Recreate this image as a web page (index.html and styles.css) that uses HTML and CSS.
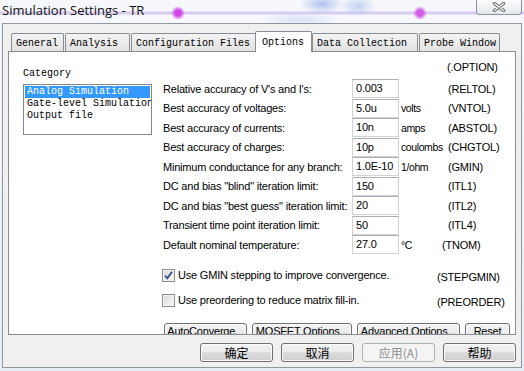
FILE: index.html
```html
<!DOCTYPE html>
<html>
<head>
<meta charset="utf-8">
<title>Simulation Settings - TR</title>
<link rel="stylesheet" href="styles.css">
</head>
<body>
<div class="win">
  <div class="titlebar">
    <span class="title">Simulation Settings - TR</span>
    <div class="close">
      <svg width="14" height="10" viewBox="0 0 14 10"><path d="M2.5 1.5 L11.5 8.5 M11.5 1.5 L2.5 8.5" stroke="#6b6b6b" stroke-width="3.4" stroke-linecap="round"/><path d="M2.5 1.5 L11.5 8.5 M11.5 1.5 L2.5 8.5" stroke="#fafafa" stroke-width="1.3" stroke-linecap="round"/></svg>
    </div>
  </div>
  <div class="frame">
    <div class="tabs">
      <div class="tab t-gen">General</div>
      <div class="tab t-ana">Analysis</div>
      <div class="tab t-cfg">Configuration Files</div>
      <div class="tab sel t-opt">Options</div>
      <div class="tab t-dc">Data Collection</div>
      <div class="tab t-pw">Probe Window</div>
    </div>
    <div class="panel">
      <div class="cat">
        <div class="cat-label">Category</div>
        <div class="listbox">
          <div class="li sel">Analog Simulation</div>
          <div class="li">Gate-level Simulation</div>
          <div class="li">Output file</div>
        </div>
      </div>
      <div class="opts">
        <div class="optline">(.OPTION)</div>
        <div class="form">
          <span class="lbl">Relative accuracy of V's and I's:</span><span class="inp">0.003</span><span class="unit"></span><span class="code">(RELTOL)</span>
          <span class="lbl">Best accuracy of voltages:</span><span class="inp">5.0u</span><span class="unit">volts</span><span class="code">(VNTOL)</span>
          <span class="lbl">Best accuracy of currents:</span><span class="inp">10n</span><span class="unit">amps</span><span class="code">(ABSTOL)</span>
          <span class="lbl">Best accuracy of charges:</span><span class="inp">10p</span><span class="unit">coulombs</span><span class="code">(CHGTOL)</span>
          <span class="lbl">Minimum conductance for any branch:</span><span class="inp">1.0E-10</span><span class="unit">1/ohm</span><span class="code">(GMIN)</span>
          <span class="lbl">DC and bias "blind" iteration limit:</span><span class="inp">150</span><span class="unit"></span><span class="code">(ITL1)</span>
          <span class="lbl">DC and bias "best guess" iteration limit:</span><span class="inp">20</span><span class="unit"></span><span class="code">(ITL2)</span>
          <span class="lbl">Transient time point iteration limit:</span><span class="inp">50</span><span class="unit"></span><span class="code">(ITL4)</span>
          <span class="lbl">Default nominal temperature:</span><span class="inp">27.0</span><span class="unit">°C</span><span class="code l6">(TNOM)</span>
        </div>
        <div class="checks">
          <div class="chk">
            <span class="chk-l"><span class="cbox on"><svg width="11" height="11" viewBox="0 0 11 11"><path d="M2 5.5 L4.3 8.3 L9 1.8" fill="none" stroke="#3d4f8f" stroke-width="1.9"/></svg></span>Use GMIN stepping to improve convergence.</span>
            <span class="ccode">(STEPGMIN)</span>
          </div>
          <div class="chk">
            <span class="chk-l"><span class="cbox"></span>Use preordering to reduce matrix fill-in.</span>
            <span class="ccode">(PREORDER)</span>
          </div>
        </div>
        <div class="pbtns">
          <span class="pbtn w1">AutoConverge...</span>
          <span class="pbtn w2">MOSFET Options...</span>
          <span class="pbtn w3">Advanced Options...</span>
          <span class="pbtn w4">Reset</span>
        </div>
      </div>
    </div>
    <div class="dlg">
      <span class="btn">确定</span>
      <span class="btn">取消</span>
      <span class="btn dis">应用(A)</span>
      <span class="btn">帮助</span>
    </div>
  </div>
</div>
</body>
</html>
```
FILE: styles.css
```css
* { box-sizing: border-box; margin: 0; padding: 0; }
html, body { width: 524px; height: 371px; overflow: hidden; }
body {
  font-family: "Liberation Sans", Arial, sans-serif;
  font-size: 11px;
  color: #000;
  background: #eaf0f6;
}
.win {
  width: 524px;
  height: 371px;
  display: flex;
  flex-direction: column;
  background: linear-gradient(#f4f7fb, #e8eef5);
}
.titlebar {
  height: 23px;
  flex: none;
  display: flex;
  align-items: flex-start;
  background:
    radial-gradient(circle at 178px 13px, #cf47e6 0, #cf47e6 3px, rgba(207,71,230,0) 7px),
    radial-gradient(circle at 420px 13px, #d45be8 0, #d45be8 3px, rgba(212,91,232,0) 7px),
    radial-gradient(ellipse 22px 10px at 322px 4px, rgba(120,150,225,.55), rgba(120,150,225,0)),
    radial-gradient(ellipse 18px 10px at 358px 6px, rgba(130,160,230,.45), rgba(130,160,230,0)),
    radial-gradient(ellipse 40px 8px at 300px 20px, rgba(170,185,240,.35), rgba(170,185,240,0)),
    linear-gradient(rgba(0,0,0,0) 11px, rgba(205,185,235,.7) 12px, rgba(205,185,235,.7) 14px, rgba(0,0,0,0) 15px),
    #f6f8fc;
}
.title {
  font-family: "Open Sans", "Noto Sans", sans-serif;
  font-size: 13px;
  line-height: 18px;
  padding: 1px 0 0 2px;
  color: #111;
}
.close {
  margin-left: auto;
  margin-right: 2px;
  margin-top: -1px;
  width: 46px;
  height: 16px;
  border: 1px solid #8c939c;
  border-top: none;
  border-radius: 0 0 4px 4px;
  background: linear-gradient(#fdfdfe, #e4e8ee);
  display: flex;
  align-items: center;
  justify-content: center;
}
.frame {
  flex: none;
  height: 345px;
  margin: 0 2px;
  border: 1px solid #8e96a0;
  background: #f0f0f0;
  padding-top: 7px;
}
.tabs {
  display: flex;
  align-items: flex-end;
  height: 20px;
  margin-left: 8px;
  font-family: "Liberation Mono", "DejaVu Sans Mono", monospace;
  font-size: 10px;
}
.tab {
  height: 18px;
  border: 1px solid #898c95;
  border-bottom: none;
  border-radius: 2px 2px 0 0;
  margin-right: 1px;
  padding: 3px 0 0 4px;
  line-height: 13px;
  background: linear-gradient(#f4f4f4, #e2e2e2);
  white-space: nowrap;
}
.tab.sel {
  height: 21px;
  margin: 0 0 -1px -2px;
  padding: 4px 0 0 6px;
  background: #fff;
  position: relative;
  z-index: 1;
}
.t-gen { width: 53px; }
.t-ana { width: 65px; }
.t-cfg { width: 125px; }
.t-opt { width: 57px; }
.t-dc { width: 106px; }
.t-pw { width: 81px; }

.panel {
  margin-left: 5px;
  width: 508px;
  height: 284px;
  border: 1px solid #898c95;
  background: #fff;
  display: flex;
  overflow: hidden;
}
.cat {
  flex: none;
  width: 129px;
  margin-left: 14px;
  padding-top: 15px;
  font-family: "Liberation Mono", "DejaVu Sans Mono", monospace;
  font-size: 10px;
}
.cat-label { height: 14px; line-height: 14px; }
.listbox {
  margin-top: 3px;
  height: 51px;
  border: 1px solid #828790;
  padding: 1px;
  overflow: hidden;
}
.li { height: 12px; line-height: 12px; padding-left: 2px; white-space: nowrap; }
.li.sel { background: #3399ff; color: #fff; }

.opts { flex: 1; margin-left: 11px; padding-top: 8px; letter-spacing: -0.2px; }
.optline { height: 14px; line-height: 14px; padding-left: 284px; margin-bottom: 5px; }
.form {
  display: grid;
  grid-template-columns: 189px 47px 49px auto;
  grid-auto-rows: 19px;
  row-gap: 0.5px;
  align-items: center;
}
.lbl { white-space: nowrap; }
.inp {
  height: 19px;
  border: 1px solid #cfd3d8;
  border-top-color: #abadb3;
  padding-left: 3px;
  line-height: 17px;
}
.unit { padding-left: 2px; white-space: nowrap; letter-spacing: -0.4px; font-size: 10.5px; }
.code { white-space: nowrap; }
.code.l6 { margin-left: -6px; }

.checks { margin-top: 13px; margin-left: -1px; }
.chk {
  display: grid;
  grid-template-columns: 275px auto;
  height: 13px;
  line-height: 13px;
  margin-bottom: 12px;
}
.chk:last-child { margin-bottom: 0; }
.chk-l { display: flex; align-items: center; gap: 3px; white-space: nowrap; }
.ccode { padding-top: 4px; white-space: nowrap; }
.cbox {
  flex: none;
  width: 13px;
  height: 13px;
  border: 1px solid #8f8f8f;
  background: linear-gradient(135deg, #dcdcdc, #f7f7f7);
  box-shadow: inset 0 0 0 1px #f4f4f4;
  display: flex;
  align-items: center;
  justify-content: center;
}

.pbtns { display: flex; gap: 5px; margin-top: 18px; margin-left: 1px; }
.pbtn {
  flex: none;
  height: 22px;
  padding-top: 1px;
  line-height: 13px;
  text-align: center;
  border: 1px solid #707070;
  border-radius: 3px;
  background: linear-gradient(#f2f2f2, #ebebeb 50%, #dddddd 50%, #cfcfcf);
  box-shadow: inset 0 0 0 1px #fcfcfc;
  white-space: nowrap;
}
.w1 { width: 83px; }
.w2 { width: 100px; }
.w3 { width: 103px; }
.w4 { width: 45px; }

.dlg {
  display: flex;
  justify-content: flex-end;
  gap: 8px;
  padding-right: 5px;
  margin-top: 8px;
}
.btn {
  width: 73px;
  height: 19px;
  line-height: 17px;
  text-align: center;
  font-family: "Noto Sans CJK SC", "Liberation Sans", sans-serif;
  font-size: 12px;
  border: 1px solid #707070;
  border-radius: 3px;
  background: linear-gradient(#f2f2f2, #ebebeb 50%, #dddddd 50%, #cfcfcf);
  box-shadow: inset 0 0 0 1px #fcfcfc;
}
.btn.dis {
  color: #8d8d8d;
  border-color: #adb2b5;
  background: #f4f4f4;
  box-shadow: none;
}
```
